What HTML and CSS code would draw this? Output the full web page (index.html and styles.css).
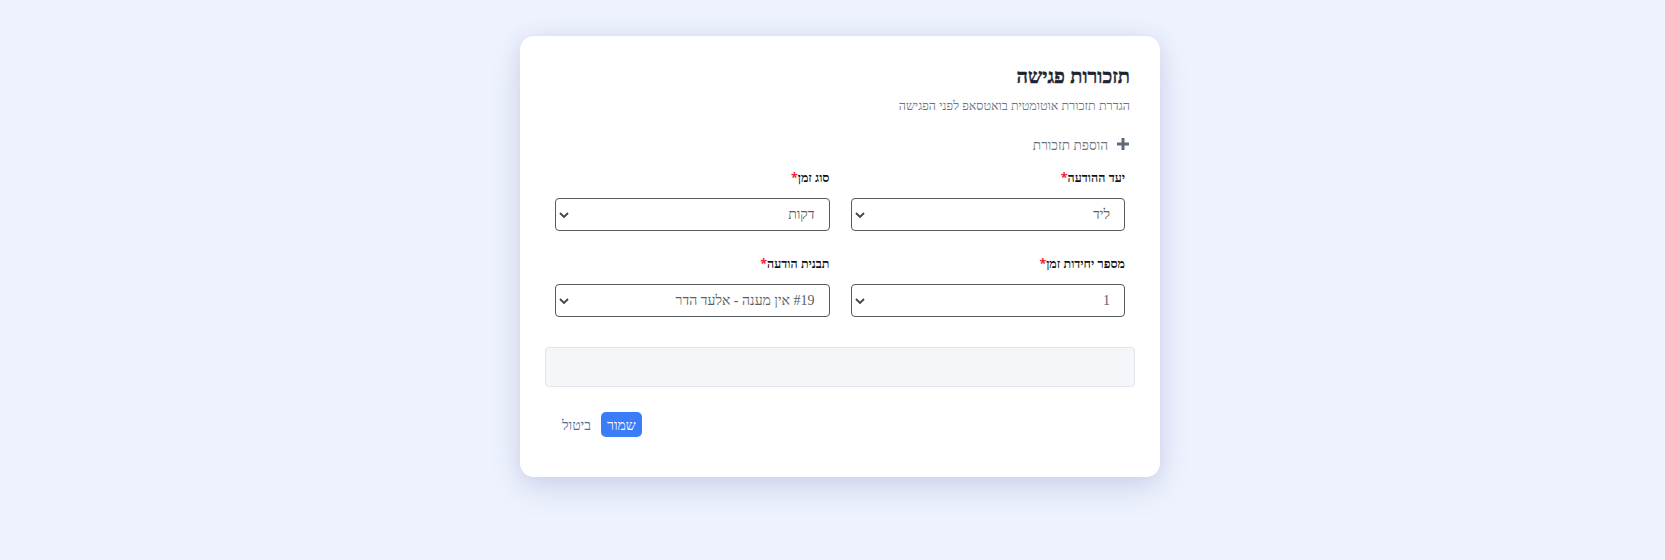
FILE: index.html
```html
<!DOCTYPE html>
<html lang="he" dir="rtl">
<head>
<meta charset="utf-8">
<title>תזכורות פגישה</title>
<link rel="stylesheet" href="styles.css">
</head>
<body>
<div class="page">
  <div class="card">
    <div class="header">
      <h1 class="title">תזכורות פגישה</h1>
      <p class="subtitle">הגדרת תזכורת אוטומטית בואטסאפ לפני הפגישה</p>
      <div class="add-row">
        <svg class="plus" width="14" height="14" viewBox="0 0 14 14"><path d="M7 1v12M1 7h12" stroke="#5f6a74" stroke-width="3" stroke-linecap="butt"/></svg>
        <span class="add-text">הוספת תזכורת</span>
      </div>
    </div>
    <div class="form-grid">
      <div class="field">
        <div class="label">יעד ההודעה<span class="req">*</span></div>
        <div class="select"><span class="value">ליד</span><svg class="chev" width="10" height="6" viewBox="0 0 10 6"><path d="M1 1l4 4 4-4" fill="none" stroke="#444" stroke-width="1.8"/></svg></div>
      </div>
      <div class="field">
        <div class="label">סוג זמן<span class="req">*</span></div>
        <div class="select"><span class="value">דקות</span><svg class="chev" width="10" height="6" viewBox="0 0 10 6"><path d="M1 1l4 4 4-4" fill="none" stroke="#444" stroke-width="1.8"/></svg></div>
      </div>
      <div class="field">
        <div class="label">מספר יחידות זמן<span class="req">*</span></div>
        <div class="select"><span class="value">1</span><svg class="chev" width="10" height="6" viewBox="0 0 10 6"><path d="M1 1l4 4 4-4" fill="none" stroke="#444" stroke-width="1.8"/></svg></div>
      </div>
      <div class="field">
        <div class="label">תבנית הודעה<span class="req">*</span></div>
        <div class="select"><span class="value">#19 אין מענה - אלעד הדר</span><svg class="chev" width="10" height="6" viewBox="0 0 10 6"><path d="M1 1l4 4 4-4" fill="none" stroke="#444" stroke-width="1.8"/></svg></div>
      </div>
    </div>
    <div class="preview"></div>
    <div class="footer">
      <button class="btn-save">שמור</button>
      <button class="btn-cancel">ביטול</button>
    </div>
  </div>
</div>
</body>
</html>
```

FILE: styles.css
```css
html, body {
  margin: 0;
  padding: 0;
}
body {
  background: #eef2fe;
  font-family: "Noto Sans";
  min-height: 560px;
}
.page {
  padding: 36px 0 0 15px;
  display: flex;
  justify-content: center;
}
.card {
  width: 640px;
  box-sizing: border-box;
  background: #ffffff;
  border-radius: 14px;
  padding: 25px 25px 40px;
  box-shadow: 0 12px 30px rgba(90, 105, 160, 0.18), 0 0 18px rgba(120, 135, 190, 0.12);
}
.header {
  padding: 0 5px;
}
.title {
  margin: 0;
  font-size: 20px;
  line-height: 30px;
  font-weight: 800;
  color: #1b2431;
  -webkit-text-stroke: 0.4px #1b2431;
}
.subtitle {
  margin: 6px 0 0;
  font-size: 12.5px;
  line-height: 18px;
  color: #6b7280;
}
.add-row {
  margin-top: 19px;
  display: flex;
  align-items: center;
  gap: 8px;
  height: 20px;
}
.plus {
  display: block;
}
.add-text {
  font-size: 13.6px;
  color: #6b7280;
}
.form-grid {
  margin-top: 16px;
  padding: 0 10px;
  display: grid;
  grid-template-columns: 1fr 1fr;
  column-gap: 21px;
  row-gap: 25px;
}
.field {
  display: flex;
  flex-direction: column;
  gap: 12px;
}
.label {
  font-size: 12.5px;
  line-height: 16px;
  font-weight: 700;
  color: #111111;
}
.req {
  color: #ef233c;
}
.select {
  height: 33px;
  box-sizing: border-box;
  border: 1px solid #555b61;
  border-radius: 4px;
  display: flex;
  align-items: center;
  justify-content: space-between;
  padding: 0 14px 0 3px;
}
.value {
  font-family: "Liberation Serif";
  font-size: 14px;
  color: #5a5e63;
}
.chev {
  display: block;
}
.preview {
  margin-top: 30px;
  height: 40px;
  box-sizing: border-box;
  background: #f4f6f9;
  border: 1px solid #e1e4e9;
  border-radius: 4px;
}
.footer {
  margin-top: 25px;
  padding: 0 10px;
  display: flex;
  justify-content: flex-end;
  gap: 3px;
}
.btn-save {
  height: 25px;
  padding: 0 6px;
  border: none;
  border-radius: 5px;
  background: #3b7cf8;
  color: #ffffff;
  font-family: "Noto Sans";
  font-size: 14px;
}
.btn-cancel {
  height: 25px;
  padding: 0 7px;
  border: none;
  background: transparent;
  color: #4f6f9c;
  font-family: "Noto Sans";
  font-size: 14px;
}
```
